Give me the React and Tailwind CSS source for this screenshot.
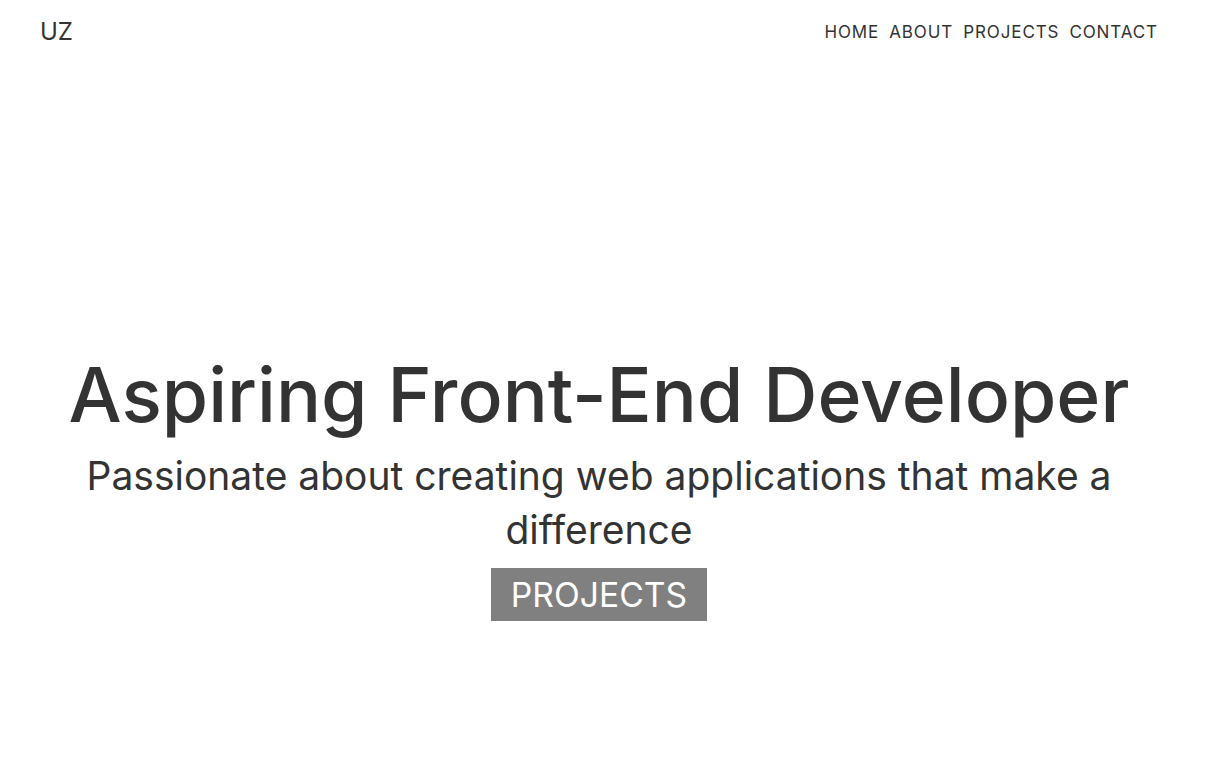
export default function App() {
  const links = ["HOME", "ABOUT", "PROJECTS", "CONTACT"];

  return (
    <div className="min-h-screen w-[1198px] bg-white text-[#333333]" style={{ fontFamily: "Inter, 'Noto Sans', sans-serif" }}>
      {/* Header */}
      <header className="h-16 flex items-center justify-between px-10">
        <div className="text-[24px] font-normal">UZ</div>
        <nav className="flex gap-[10px]">
          {links.map((l) => (
            <a key={l} href="#" className="text-[17px] tracking-[0.9px] leading-none">
              {l}
            </a>
          ))}
        </nav>
      </header>

      {/* Hero */}
      <main className="flex flex-col items-center pt-[277px] text-center">
        <h1 className="text-[75px] leading-[108px] font-medium">Aspiring Front-End Developer</h1>
        <p className="text-[39px] leading-[54px] max-w-[1060px]">
          Passionate about creating web applications that make a difference
        </p>
        <a href="#" className="mt-[11px] bg-[#808080] text-white text-[33.7px] leading-[53px] px-5">
          PROJECTS
        </a>
      </main>
    </div>
  );
}
